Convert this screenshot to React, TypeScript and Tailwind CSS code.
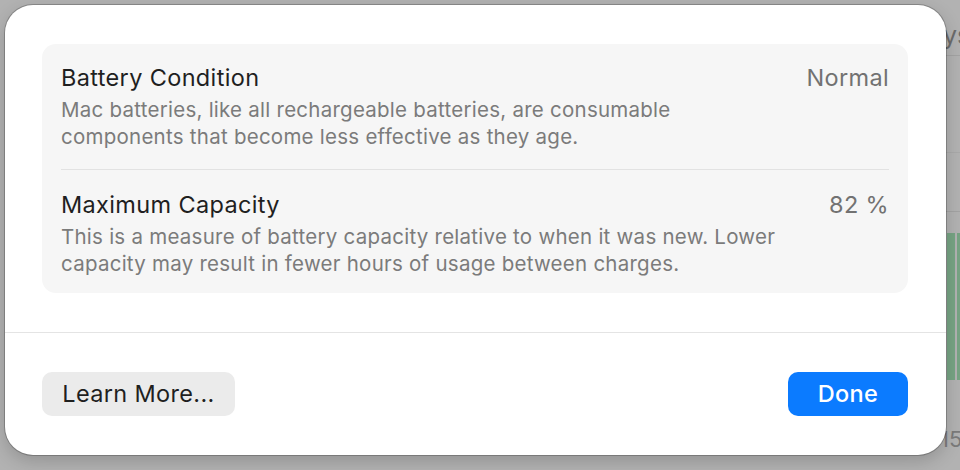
import React from "react";

const font = { fontFamily: 'Inter, "Noto Sans", sans-serif' };

export default function App() {
  return (
    <div
      className="relative w-[960px] h-[470px] overflow-hidden bg-[#b2b2b2]"
      style={font}
    >
      {/* background app peeking on the right */}
      <div className="flex h-full justify-end">
        <div className="flex w-[20px] flex-col overflow-hidden">
          <div className="h-[20px]" />
          <div className="whitespace-nowrap pl-[3px] text-[25px] leading-[30px] text-[#6b6b6b]">
            ys
          </div>
          <div className="h-[5px]" />
          <div className="h-px bg-[#a3a3a3]" />
          <div className="h-[96px]" />
          <div className="h-px bg-[#a9a9a9]" />
          <div className="h-[58px]" />
          <div className="h-px bg-[#a3a3a3]" />
          <div className="h-[21px]" />
          <div className="flex h-[147px] gap-[2px] pl-[7px]">
            <div className="w-[8px] bg-[#77a484]" />
            <div className="flex-1 bg-[#77a484]" />
          </div>
          <div className="h-[46px]" />
          <div className="whitespace-nowrap text-[22px] leading-[26px] text-[#7b7b7b]">
            15
          </div>
        </div>
      </div>

      {/* modal sheet */}
      <div className="absolute left-[5px] top-[5px] flex h-[450px] w-[941px] flex-col rounded-[28px] bg-white shadow-[0_0_0_1px_rgba(0,0,0,0.22),0_6px_18px_rgba(0,0,0,0.18)]">
        <div className="pl-[37px] pr-[38px] pt-[39px] pb-[39px]">
          <div className="rounded-[14px] bg-[#f6f6f6] px-[19px]">
            <div className="pt-[19px] pb-[19px]">
              <div className="flex items-start justify-between">
                <div className="text-[23.5px] leading-[29px] tracking-[0.35px] text-[#1f1f1f]">
                  Battery Condition
                </div>
                <div className="text-[23.5px] leading-[29px] tracking-[0.35px] text-[#727272]">
                  Normal
                </div>
              </div>
              <div className="mt-[4px] text-[20.5px] leading-[27px] tracking-[0.25px] text-[#7b7b7b]">
                Mac batteries, like all rechargeable batteries, are consumable
                <br />
                components that become less effective as they age.
              </div>
            </div>
            <div className="h-px bg-[#e2e2e2]" />
            <div className="pt-[20px] pb-[16px]">
              <div className="flex items-start justify-between">
                <div className="text-[23.5px] leading-[29px] tracking-[0.35px] text-[#1f1f1f]">
                  Maximum Capacity
                </div>
                <div className="text-[23.5px] leading-[29px] tracking-[0.35px] text-[#727272]">
                  82 %
                </div>
              </div>
              <div className="mt-[4px] text-[20.5px] leading-[27px] tracking-[0.25px] text-[#7b7b7b]">
                This is a measure of battery capacity relative to when it was
                new. Lower
                <br />
                capacity may result in fewer hours of usage between charges.
              </div>
            </div>
          </div>
        </div>
        <div className="h-px bg-[#e4e4e4]" />
        <div className="flex items-center justify-between pl-[37px] pr-[38px] pt-[39px]">
          <button className="flex h-[44px] w-[193px] items-center justify-center rounded-[10px] bg-[#ebebeb] text-[23.5px] tracking-[0.35px] text-[#1f1f1f]">
            Learn More...
          </button>
          <button className="flex h-[44px] w-[120px] items-center justify-center rounded-[10px] bg-[#0b7bff] text-[23.5px] font-medium tracking-[0.3px] text-white">
            Done
          </button>
        </div>
      </div>
    </div>
  );
}
